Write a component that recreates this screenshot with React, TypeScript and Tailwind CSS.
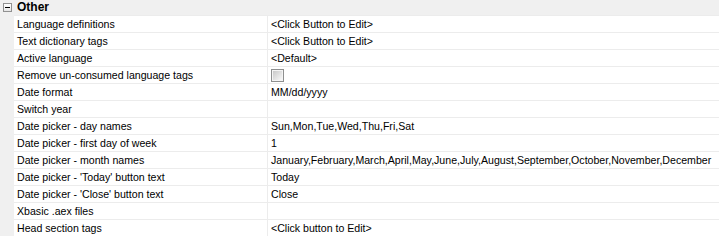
import React from "react";

const rows: { name: string; value?: string; checkbox?: boolean }[] = [
  { name: "Language definitions", value: "<Click Button to Edit>" },
  { name: "Text dictionary tags", value: "<Click Button to Edit>" },
  { name: "Active language", value: "<Default>" },
  { name: "Remove un-consumed language tags", checkbox: true },
  { name: "Date format", value: "MM/dd/yyyy" },
  { name: "Switch year", value: "" },
  { name: "Date picker - day names", value: "Sun,Mon,Tue,Wed,Thu,Fri,Sat" },
  { name: "Date picker - first day of week", value: "1" },
  {
    name: "Date picker - month names",
    value:
      "January,February,March,April,May,June,July,August,September,October,November,December",
  },
  { name: "Date picker - 'Today' button text", value: "Today" },
  { name: "Date picker - 'Close' button text", value: "Close" },
  { name: "Xbasic .aex files", value: "" },
  { name: "Head section tags", value: "<Click button to Edit>" },
];

export default function App() {
  return (
    <div
      className="w-[719px] h-[236px] bg-white overflow-hidden text-[10.6px] leading-[16px] text-black"
      style={{ fontFamily: '"Liberation Sans", Arial, sans-serif' }}
    >
      <div className="h-[15px] bg-[#f0f0f0] flex items-start">
        <div className="w-[14px] flex justify-start pl-[3px] pt-[3px]">
          <div className="w-[9px] h-[9px] border border-[#919191] bg-gradient-to-b from-white to-[#e6e6e6] flex items-center justify-center">
            <div className="w-[5px] h-[1px] bg-black" />
          </div>
        </div>
        <div className="pl-[3px] font-bold text-[12px] leading-[15px]">Other</div>
      </div>
      {rows.map((r, i) => (
        <div key={i} className="flex h-[17px]">
          <div className="w-[14px] bg-[#f0f0f0] shrink-0" />
          <div className="flex flex-1 border-t border-[#ececec]">
            <div className="w-[254px] shrink-0 border-r border-[#ececec] pl-[3px] whitespace-nowrap overflow-hidden">
              {r.name}
            </div>
            <div className="flex-1 pl-[3px] whitespace-nowrap overflow-hidden flex items-center">
              {r.checkbox ? (
                <div className="w-[13px] h-[13px] border border-[#8e8f8f] bg-[#f4f4f4] p-[1px]">
                  <div className="w-full h-full bg-gradient-to-br from-[#c8c8c8] to-[#f8f8f8]" />
                </div>
              ) : (
                <span>{r.value}</span>
              )}
            </div>
          </div>
        </div>
      ))}
    </div>
  );
}
